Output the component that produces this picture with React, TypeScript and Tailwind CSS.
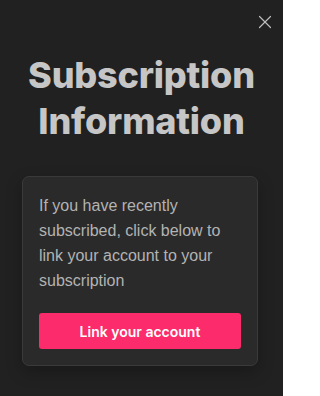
import React from "react";
import { X } from "lucide-react";

export default function App() {
  return (
    <div className="relative w-[283px] h-[396px] bg-[#212121] flex flex-col items-center font-['Inter',sans-serif]">
      <button
        aria-label="Close"
        className="absolute right-[7px] top-[11px] text-[#bdbdbd]"
      >
        <X className="w-[22px] h-[22px]" strokeWidth={1.3} />
      </button>

      <h1 className="mt-[52px] text-center text-[36px] leading-[46px] font-extrabold tracking-[-0.2px] text-[#c6c6c6]">
        Subscription
        <br />
        Information
      </h1>

      <div className="mt-[32px] mr-[3px] w-[236px] rounded-[7px] border border-[#3a3a3a] bg-[#2a2a2a] px-[16px] pt-[16px] pb-[16px] shadow-[0_6px_16px_rgba(0,0,0,0.25)]">
        <p className="font-['Liberation_Sans',Arial,sans-serif] text-[16px] leading-[25px] text-[#b3b3b3]">
          If you have recently subscribed, click below to link your account to
          your subscription
        </p>
        <button className="mt-[20px] w-full h-[36px] rounded-[3px] bg-[#fc2b6c] text-white text-[14px] font-semibold">
          Link your account
        </button>
      </div>
    </div>
  );
}
